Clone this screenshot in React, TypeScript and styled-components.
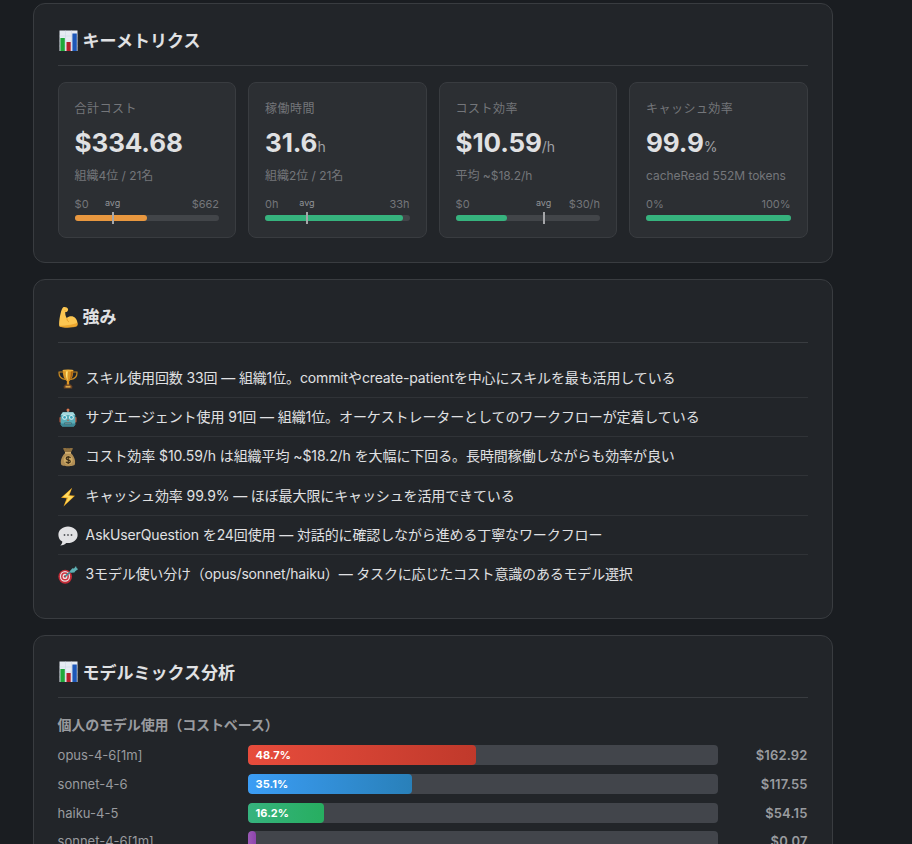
import React from "react";
import styled, { createGlobalStyle } from "styled-components";

type Metric = {
    label: string;
    value: string;
    unit?: string;
    sub: string;
    min: string;
    max: string;
    fill: number;
    avg?: number;
    color: string;
};

const metrics: Metric[] = [
    { label: '合計コスト', value: '$334.68', sub: '組織4位 / 21名', min: '$0', max: '$662', fill: 50, avg: 26.3, color: '#e8973f' },
    { label: '稼働時間', value: '31.6', unit: 'h', sub: '組織2位 / 21名', min: '0h', max: '33h', fill: 95.7, avg: 29, color: '#36b37e' },
    { label: 'コスト効率', value: '$10.59', unit: '/h', sub: '平均 ~$18.2/h', min: '$0', max: '$30/h', fill: 35.3, avg: 60.9, color: '#36b37e' },
    { label: 'キャッシュ効率', value: '99.9', unit: '%', sub: 'cacheRead 552M tokens', min: '0%', max: '100%', fill: 100, color: '#36b37e' },
];

const strengths = [
    { icon: <Trophy />, spacing: -0.13, text: 'スキル使用回数 33回 — 組織1位。commitやcreate-patientを中心にスキルを最も活用している' },
    { icon: <Robot />, spacing: -0.1, text: 'サブエージェント使用 91回 — 組織1位。オーケストレーターとしてのワークフローが定着している' },
    { icon: <MoneyBag />, spacing: -0.08, text: 'コスト効率 $10.59/h は組織平均 ~$18.2/h を大幅に下回る。長時間稼働しながらも効率が良い' },
    { icon: <Bolt />, spacing: -0.12, text: 'キャッシュ効率 99.9% — ほぼ最大限にキャッシュを活用できている' },
    { icon: <Bubble />, spacing: -0.12, text: 'AskUserQuestion を24回使用 — 対話的に確認しながら進める丁寧なワークフロー' },
    { icon: <Target />, spacing: -0.18, text: '3モデル使い分け（opus/sonnet/haiku）— タスクに応じたコスト意識のあるモデル選択' },
];

const models = [
    { name: 'opus-4-6[1m]', percent: 48.7, label: '48.7%', cost: '$162.92', from: '#e74c3c', to: '#c0392b' },
    { name: 'sonnet-4-6', percent: 35, label: '35.1%', cost: '$117.55', from: '#3b9df5', to: '#2980b9' },
    { name: 'haiku-4-5', percent: 16.2, label: '16.2%', cost: '$54.15', from: '#36b37e', to: '#27ae60' },
    { name: 'sonnet-4-6[1m]', percent: 0.02, label: '', cost: '$0.07', from: '#9b59b6', to: '#8e44ad' },
];

function Chart() {
    return (
        <svg width="20" height="22" viewBox="0 0 20 22">
            <rect x="1.5" y=".5" width="18" height="20.5" fill="#e6ebf3" />
            <path d="M1.5 6H19.5M1.5 11H19.5M1.5 16H19.5M7.5 .5V21M13.5 .5V21" stroke="#cbd5e4" strokeWidth=".5" />
            <rect x="2.4" y="8" width="4.4" height="13" fill="#1fa83a" />
            <rect x="8.5" y="12" width="4.2" height="9" fill="#b51f2c" />
            <rect x="14.4" y="3.5" width="4.4" height="17.5" fill="#1d57b8" />
        </svg>
    );
}

function Muscle() {
    return (
        <svg width="20" height="22" viewBox="0 0 20 22">
            <path d="M5.2 1.2C6.8.5 9.6 1.2 10 2.9C10.3 4.4 9.6 5.5 8.6 5.9L7.3 6C7.1 8.5 7.6 10.4 8.8 12.1C10.7 9.9 15.1 9.5 17.3 11.9C19.5 14.4 20.2 18.4 18.9 20.1C15 21.8 5.1 22 1.6 20.4C.5 19.4 1.4 11.8 2.6 7.4C3.2 5 4 2 5.2 1.2Z" fill="#fcc651" />
            <path d="M2 20.3C6 21.7 15 21.6 18.8 20.1C19.2 19.3 19.3 18.2 19.2 17.2C15.4 19.4 8 19.7 2 20.3ZM8.8 12.1C8.8 14 9.5 15.3 11 16M6.3 4.3L8.6 5.6" fill="#f0a92f" stroke="#dd9522" strokeWidth=".5" />
        </svg>
    );
}

function Trophy() {
    return (
        <svg width="20" height="20" viewBox="0 0 20 20">
            <path d="M5 3H1.1C.7 6.5 2.8 9.6 7 10.5M15 3H18.9C19.3 6.5 17.2 9.6 13 10.5" fill="none" stroke="#c98a22" strokeWidth="1.2" />
            <path d="M4.8 1H15.2C15.4 6.5 14 10.3 11.1 12.2L11.3 16H8.7L8.9 12.2C6 10.3 4.6 6.5 4.8 1Z" fill="#dc9626" />
            <path d="M8 2H10C9.3 5.4 9.3 9 10 12C8.2 9.8 7.4 5.9 8 2Z" fill="#ffe174" />
            <path d="M12.7 2H14.8C14.8 6 13.8 9.4 11.2 11.5C12.5 9 13 5.2 12.7 2Z" fill="#a9610f" />
            <ellipse cx="10" cy="1.6" rx="5.4" ry="1" fill="#efb23a" />
            <path d="M7 15.6H13L14.2 17.2V19.6H5.8V17.2Z" fill="#6b4224" />
            <rect x="7.5" y="16.8" width="5" height="1.8" fill="#d9a545" />
        </svg>
    );
}

function Robot() {
    return (
        <svg width="20" height="20" viewBox="0 0 20 20">
            <path d="M10 4V2" stroke="#b7c6c8" strokeWidth="1.2" />
            <circle cx="10" cy="2" r="1.5" fill="#d9774f" />
            <rect x="1.4" y="9" width="2.2" height="5.5" rx="1" fill="#b0573f" />
            <rect x="16.4" y="9" width="2.2" height="5.5" rx="1" fill="#b0573f" />
            <path d="M4.8 4.2H15.2L17.3 7V16.5L15.8 18.6H4.2L2.7 16.5V7Z" fill="#5aaeb8" />
            <path d="M4.8 4.2H15.2L17 7H3Z" fill="#a5d9de" />
            <path d="M2.9 15.5H17.1V16.5L15.8 18.6H4.2L2.9 16.5Z" fill="#3c8795" />
            <circle cx="6.6" cy="9.4" r="2.4" fill="#d9f1f3" />
            <circle cx="13.4" cy="9.4" r="2.4" fill="#d9f1f3" />
            <circle cx="6.6" cy="9.4" r="1.4" fill="#3aa3bb" />
            <circle cx="13.4" cy="9.4" r="1.4" fill="#3aa3bb" />
            <path d="M9 12.8L10 11L11 12.8Z" fill="#c6593b" />
            <rect x="6.4" y="14.2" width="7.2" height="2.4" rx=".8" fill="#315e66" />
            <path d="M8 14.5V16.3M10 14.5V16.3M12 14.5V16.3" stroke="#c4dedf" strokeWidth=".7" />
        </svg>
    );
}

function MoneyBag() {
    return (
        <svg width="20" height="20" viewBox="0 0 20 20">
            <path d="M5 1.5C6.8.5 8.4 1.7 10 .9C11.6 1.7 13.2.5 15 1.5L12.7 5.7H7.3Z" fill="#8f703f" />
            <path d="M7.3 6H12.7C15.8 8.4 18 13.5 16.8 17.4C16.1 19.7 3.9 19.7 3.2 17.4C2 13.5 4.2 8.4 7.3 6Z" fill="#b18e55" />
            <path d="M7 5.8H13" stroke="#e0bd7a" strokeWidth="1.4" />
            <circle cx="10.2" cy="13" r="4.5" fill="#ceaa64" />
            <path d="M12.5 10.8C11.6 9.5 8.2 9.6 8.2 11.4C8.2 13.4 12.3 12.5 12.3 14.5C12.3 16.3 8.7 16.3 7.9 14.8M10.2 9V17" fill="none" stroke="#3f2f18" strokeWidth="1.2" />
        </svg>
    );
}

function Bolt() {
    return (
        <svg width="20" height="20" viewBox="0 0 20 20">
            <path d="M14.2.8L3 10.8L8.7 11.3L5.5 19.5L17 8.8L11.3 8.2Z" fill="#f3ad22" />
            <path d="M13.2 2.2L4.8 10.1L10.4 10.6L6.8 17.4L15.3 9.4L9.8 8.8Z" fill="#ffdc62" />
        </svg>
    );
}

function Bubble() {
    return (
        <svg width="20" height="20" viewBox="0 0 20 20">
            <path d="M10 .6C4.5 .6.4 4.2.4 8.9C.4 11.8 1.9 14.3 4.3 15.6C4.3 17.2 3.5 18.6 2.2 19.6C5 19.5 7 18.4 8.2 17C14.8 17.6 19.6 13.9 19.6 8.9C19.6 4.2 15.5 .6 10 .6Z" fill="#e2e2e4" />
            <circle cx="6.5" cy="9" r=".9" fill="#55575c" />
            <circle cx="10" cy="9" r=".9" fill="#55575c" />
            <circle cx="13.5" cy="9" r=".9" fill="#55575c" />
        </svg>
    );
}

function Target() {
    return (
        <svg width="20" height="20" viewBox="0 0 20 20">
            <ellipse cx="7.2" cy="11.8" rx="6.8" ry="7" fill="#c42d38" />
            <ellipse cx="7" cy="11.4" rx="5.1" ry="5.4" fill="#eadfe1" />
            <ellipse cx="7" cy="11.4" rx="3.9" ry="4.1" fill="#cf3540" />
            <ellipse cx="7" cy="11.4" rx="2.4" ry="2.6" fill="#eee3e4" />
            <circle cx="7" cy="11.4" r="1.2" fill="#c9242f" />
            <path d="M7 11.4L14 5.6" stroke="#3f8c96" strokeWidth="1.4" />
            <path d="M11.8 6.2L14.4 3.2L16 3.5L18 1L18.6 3.1L20.2 4.1L17.2 6.2L16.4 7.4L13.2 7.8Z" fill="#5fb0b4" />
        </svg>
    );
}

export default function App() {
    return (
        <Page>
            <GlobalStyle />
            <Card>
                <Title><Chart /><span>キーメトリクス</span></Title>
                <MetricGrid>
                    {metrics.map((m) => (
                        <MetricBox key={m.label}>
                            <Label>{m.label}</Label>
                            <Value>{m.value}{m.unit && <small>{m.unit}</small>}</Value>
                            <Sub>{m.sub}</Sub>
                            <Range><span>{m.min}</span><span>{m.max}</span></Range>
                            <Gauge>
                                <GaugeFill $color={m.color} style={{ width: `${m.fill}%` }} />
                                {m.avg && <Avg style={{ left: `${m.avg}%` }}><span>avg</span></Avg>}
                            </Gauge>
                        </MetricBox>
                    ))}
                </MetricGrid>
            </Card>

            <Card>
                <Title><Muscle /><span>強み</span></Title>
                <List>
                    {strengths.map((item, key) => <Item key={key} $spacing={item.spacing}>{item.icon}<span>{item.text}</span></Item>)}
                </List>
            </Card>

            <Card>
                <Title><Chart /><span>モデルミックス分析</span></Title>
                <SubTitle>個人のモデル使用（コストベース）</SubTitle>
                {models.map((m) => (
                    <ModelRow key={m.name}>
                        <ModelName>{m.name}</ModelName>
                        <Track>
                            <TrackFill $from={m.from} $to={m.to} style={{ width: `${m.percent}%` }}>{m.label}</TrackFill>
                        </Track>
                        <Cost>{m.cost}</Cost>
                    </ModelRow>
                ))}
            </Card>
        </Page>
    );
}

const GlobalStyle = createGlobalStyle`
    * {
        box-sizing: border-box;
    }

    body {
        margin: 0;
        background: #1a1d21;
        overflow: hidden;
    }
`;

const Page = styled.div`
    display: flex;
    flex-direction: column;
    gap: 16px;
    height: 844px;
    padding: 3px 0 0 32.6px;
    overflow: hidden;
    background: #1a1d21;
    color: #e0e1e3;
    font-family: 'Inter', 'Noto Sans CJK JP', sans-serif;
`;

const Card = styled.section`
    flex-shrink: 0;
    width: 800px;
    padding: 24px;
    background: #222529;
    border: 1px solid #393c40;
    border-radius: 12px;
`;

const Title = styled.h2`
    display: flex;
    align-items: center;
    gap: 5px;
    height: 38.4px;
    margin: 0 0 15.7px;
    padding-bottom: 12.3px;
    border-bottom: 1px solid #393c40;
    font-size: 17px;
    font-weight: 700;
    line-height: 25px;
    white-space: nowrap;

    span {
        margin-top: 2px;
    }
`;

const MetricGrid = styled.div`
    display: grid;
    grid-template-columns: repeat(4, 1fr);
    gap: 12px;
    padding-bottom: 0.3px;
`;

const MetricBox = styled.div`
    height: 156px;
    padding: 17px 16px 0;
    background: #2c2f33;
    border: 1px solid #393c40;
    border-radius: 8px;
    white-space: nowrap;
`;

const Label = styled.div`
    height: 18px;
    font-size: 12px;
    line-height: 18px;
    letter-spacing: 0.45px;
    color: #74767a;
`;

const Value = styled.div`
    height: 34px;
    margin-top: 8px;
    font-size: 26px;
    font-weight: 700;
    line-height: 34px;
    letter-spacing: -0.13px;

    small {
        font-size: 14px;
        font-weight: 400;
        line-height: 1;
        color: #a0a2a6;
    }
`;

const Sub = styled.div`
    height: 18px;
    margin-top: 7px;
    font-size: 12px;
    line-height: 18px;
    letter-spacing: -0.04px;
    color: #74767a;
`;

const Range = styled.div`
    display: flex;
    justify-content: space-between;
    margin-top: 11px;
    font-size: 11px;
    line-height: 16px;
    color: #74767a;
`;

const Gauge = styled.div`
    position: relative;
    height: 6px;
    margin-top: 3px;
    background: #424549;
    border-radius: 3px;
`;

const GaugeFill = styled.div<{ $color: string }>`
    height: 100%;
    border-radius: 3px;
    background: ${(props) => props.$color};
`;

const Avg = styled.div`
    position: absolute;
    top: -3px;
    width: 2px;
    height: 12px;
    margin-left: -1px;
    background: #a5a6a9;

    span {
        position: absolute;
        bottom: 14px;
        left: 1px;
        transform: translateX(-50%);
        font-size: 9px;
        line-height: 14px;
        color: #929498;
    }
`;

const List = styled.div`
    display: flex;
    flex-direction: column;
`;

const Item = styled.div<{ $spacing: number }>`
    display: flex;
    align-items: center;
    gap: 8px;
    height: 39.35px;
    border-bottom: 1px solid #303337;
    font-size: 14px;
    line-height: 22px;
    letter-spacing: ${(props) => props.$spacing}px;
    white-space: nowrap;

    svg {
        margin-top: 2px;
    }

    &:last-child {
        height: 38.6px;
        border-bottom: 0;
    }
`;

const SubTitle = styled.h3`
    margin: 0 0 8.7px;
    font-size: 14px;
    font-weight: 600;
    line-height: 22px;
    letter-spacing: -0.15px;
    color: #999b9f;
`;

const ModelRow = styled.div`
    display: grid;
    grid-template-columns: 180px 1fr 80px;
    gap: 10px;
    align-items: center;
    height: 20.8px;
    margin-bottom: 8px;
    font-size: 13px;
    color: #999b9f;
`;

const ModelName = styled.div`
    white-space: nowrap;
`;

const Track = styled.div`
    height: 20px;
    background: #42454b;
    border-radius: 4px;
    overflow: hidden;
`;

const TrackFill = styled.div<{ $from: string; $to: string }>`
    height: 100%;
    min-width: 8px;
    padding-left: 8px;
    border-radius: 4px;
    background: linear-gradient(90deg, ${(props) => props.$from}, ${(props) => props.$to});
    color: #ffffff;
    font-size: 11px;
    font-weight: 700;
    line-height: 20px;
`;

const Cost = styled.div`
    text-align: right;
    font-weight: 600;
    letter-spacing: 0.15px;
`;
